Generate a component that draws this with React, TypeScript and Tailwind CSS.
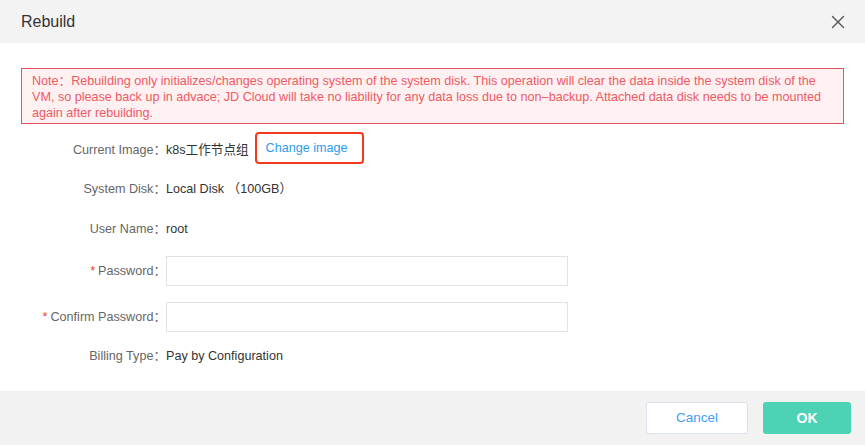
import { X } from 'lucide-react';

const font = { fontFamily: '"Liberation Sans", Arial, "Noto Sans CJK SC", sans-serif' };

const Row = ({ label, required, className, children }: { label: string; required?: boolean; className: string; children: React.ReactNode }) => (
  <div className={`flex h-[32px] items-center ${className}`}>
    <div className="w-[166px] shrink-0 text-right text-[12.6px] text-[#666]">
      {required && <span className="mr-[3px] text-[#f04134]">*</span>}
      {label}：
    </div>
    <div className="flex items-center text-[12.6px] text-[#333]">{children}</div>
  </div>
);

const App = () => {
  return (
    <div className="flex h-[445px] w-[865px] flex-col bg-white" style={font}>
      <div className="flex h-[43px] shrink-0 items-center justify-between bg-[#f3f3f3] pl-[21px] pr-[16px]">
        <span className="text-[16px] text-[#333]">Rebuild</span>
        <X className="h-[22px] w-[22px] text-[#555]" strokeWidth={1.5} />
      </div>

      <div className="flex flex-col">
        <div className="mx-[21px] mt-[25px] w-[823px] whitespace-nowrap border border-[#e5545e] bg-[#fff1f2] px-[10px] pb-[2px] pt-[4px] text-[12.6px] leading-[16px] text-[#ee5a64]">
          Note：Rebuilding only initializes/changes operating system of the system disk. This operation will clear the data inside the system disk of the
          <br />
          VM, so please back up in advace; JD Cloud will take no liability for any data loss due to non–backup. Attached data disk needs to be mounted
          <br />
          again after rebuilding.
        </div>

        <Row label="Current Image" className="mt-[10px]">
          <span>k8s工作节点组</span>
          <span className="ml-[6px] flex h-[32px] w-[109px] -translate-y-[2px] items-center rounded-[4px] border-2 border-[#f5391d] pl-[9px] text-[#2d9cf0]">
            Change image
          </span>
        </Row>
        <Row label="System Disk" className="mt-[7px]">
          Local Disk （100GB）
        </Row>
        <Row label="User Name" className="mt-[8px]">
          root
        </Row>
        <Row label="Password" required className="mt-[10px]">
          <input type="password" className="h-[30px] w-[402px] border border-[#e2e2e2] bg-white px-2 outline-none" />
        </Row>
        <Row label="Confirm Password" required className="mt-[14px]">
          <input type="password" className="h-[30px] w-[402px] border border-[#e2e2e2] bg-white px-2 outline-none" />
        </Row>
        <Row label="Billing Type" className="mt-[7px]">
          Pay by Configuration
        </Row>
      </div>

      <div className="mt-auto flex h-[54px] shrink-0 items-center justify-end gap-[15px] bg-[#f2f2f2] pr-[14px]">
        <button className="h-[32px] w-[102px] rounded-[3px] border border-[#d9e1ea] bg-white text-[13.5px] text-[#3fa0f5]">
          Cancel
        </button>
        <button className="h-[32px] w-[88px] rounded-[3px] bg-[#4dd2b6] text-[14px] font-bold text-white">
          OK
        </button>
      </div>
    </div>
  );
};

export default App;
